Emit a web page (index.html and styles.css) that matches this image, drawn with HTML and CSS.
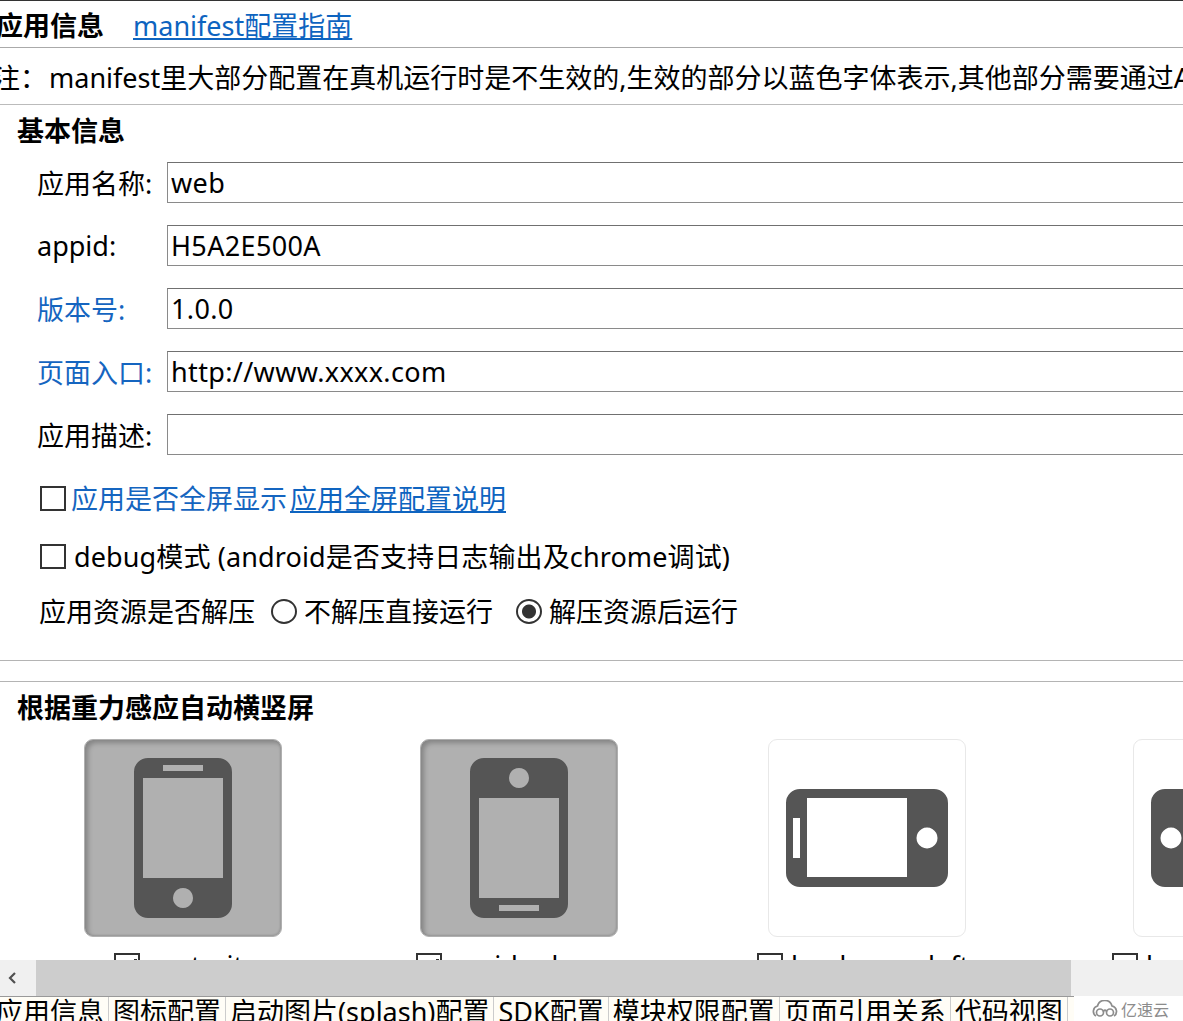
FILE: index.html
```html
<!DOCTYPE html>

<html lang="zh-CN">
    <head>
        <meta charset="utf-8">
        <title>manifest</title>
        <link rel="stylesheet" href="styles.css">
    </head>

    <body>
        <div class="pane">
            <div class="title-row">
                <b class="title-text">应用信息</b>
                <a href="#" class="guide-link">manifest配置指南</a>
            </div>
            <div class="note-row"><span class="note-head">注：</span>manifest里大部分配置在真机运行时是不生效的,生效的部分以蓝色字体表示,其他部分需要通过A</div>

            <div class="section">
                <h2 class="section-title">基本信息</h2>
                <div class="form-list">
                    <div class="form-row">
                        <label class="form-label">应用名称:</label>
                        <input type="text" class="form-input" value="web">
                    </div>
                    <div class="form-row">
                        <label class="form-label">appid:</label>
                        <input type="text" class="form-input" value="H5A2E500A">
                    </div>
                    <div class="form-row">
                        <label class="form-label blue">版本号:</label>
                        <input type="text" class="form-input" value="1.0.0">
                    </div>
                    <div class="form-row">
                        <label class="form-label blue">页面入口:</label>
                        <input type="text" class="form-input" value="http://www.xxxx.com">
                    </div>
                    <div class="form-row">
                        <label class="form-label">应用描述:</label>
                        <input type="text" class="form-input" value="">
                    </div>
                </div>

                <div class="option-row fullscreen-row">
                    <input type="checkbox" class="check">
                    <span class="blue">应用是否全屏显示</span>
                    <a href="#" class="guide-link small-gap">应用全屏配置说明</a>
                </div>
                <div class="option-row debug-row">
                    <input type="checkbox" class="check">
                    <span class="debug-text">debug模式 (android是否支持日志输出及chrome调试)</span>
                </div>
                <div class="option-row unzip-row">
                    <span>应用资源是否解压</span>
                    <input type="radio" name="unzip" class="radio first-radio">
                    <span>不解压直接运行</span>
                    <input type="radio" name="unzip" class="radio second-radio" checked>
                    <span>解压资源后运行</span>
                </div>
            </div>

            <div class="section orient-section">
                <h2 class="section-title">根据重力感应自动横竖屏</h2>
                <div class="orient-grid">
                    <div class="orient-item">
                        <div class="orient-card selected">
                            <svg viewBox="0 0 198 198" width="198" height="198">
                                <path class="phone" fill-rule="evenodd" d="M64 19h70a14 14 0 0 1 14 14v132a14 14 0 0 1-14 14h-70a14 14 0 0 1-14-14v-132a14 14 0 0 1 14-14zM59 39v100h80v-100zM79 26v6h40v-6zM99 149a10 10 0 1 0 .01 0z"/>
                            </svg>
                        </div>
                        <label class="orient-label first-label"><input type="checkbox" class="check" checked>portrait</label>
                    </div>
                    <div class="orient-item">
                        <div class="orient-card selected">
                            <svg viewBox="0 0 198 198" width="198" height="198">
                                <path class="phone" fill-rule="evenodd" d="M64 19h70a14 14 0 0 1 14 14v132a14 14 0 0 1-14 14h-70a14 14 0 0 1-14-14v-132a14 14 0 0 1 14-14zM59 59v100h80v-100zM79 166v6h40v-6zM99 29a10 10 0 1 0 .01 0z"/>
                            </svg>
                        </div>
                        <label class="orient-label second-label"><input type="checkbox" class="check" checked>upside-down</label>
                    </div>
                    <div class="orient-item">
                        <div class="orient-card">
                            <svg viewBox="0 0 198 198" width="198" height="198">
                                <path class="phone" fill-rule="evenodd" d="M32 50h134a14 14 0 0 1 14 14v70a14 14 0 0 1-14 14h-134a14 14 0 0 1-14-14v-70a14 14 0 0 1 14-14zM39 59v79h100v-79zM25 79v40h7v-40zM159 88.500a10.500 10.500 0 1 0 .01 0z"/>
                            </svg>
                        </div>
                        <label class="orient-label third-label"><input type="checkbox" class="check">landscape-left</label>
                    </div>
                    <div class="orient-item">
                        <div class="orient-card">
                            <svg viewBox="0 0 198 198" width="198" height="198">
                                <path class="phone" fill-rule="evenodd" d="M32 50h134a14 14 0 0 1 14 14v70a14 14 0 0 1-14 14h-134a14 14 0 0 1-14-14v-70a14 14 0 0 1 14-14zM59 59v79h100v-79zM166 79v40h7v-40zM38 88.500a10.500 10.500 0 1 0 .01 0z"/>
                            </svg>
                        </div>
                        <label class="orient-label fourth-label"><input type="checkbox" class="check">landscape-right</label>
                    </div>
                </div>
            </div>
        </div>

        <div class="scroll-bar">
            <div class="scroll-arrow">
                <svg viewBox="0 0 12 14" width="12" height="14"><path d="M9 2 L4 7 L9 12" fill="none" stroke="#505050" stroke-width="2.200"/></svg>
            </div>
            <div class="scroll-thumb"></div>
        </div>

        <div class="bottom-row">
            <div class="tabs">
                <div class="tab first-tab">应用信息</div>
                <div class="tab">图标配置</div>
                <div class="tab">启动图片(splash)配置</div>
                <div class="tab">SDK配置</div>
                <div class="tab">模块权限配置</div>
                <div class="tab">页面引用关系</div>
                <div class="tab">代码视图</div>
            </div>
            <div class="watermark">
                <svg viewBox="0 0 26 18" width="26" height="18">
                    <g fill="none" stroke="#8c8c8c" stroke-width="1.700">
                        <path d="M4 16A5.500 5.500 0 0 1 5.500 6A7.500 7.500 0 0 1 20 6A5.500 5.500 0 0 1 22 16"/>
                        <circle cx="8" cy="12.500" r="3.500"/>
                        <circle cx="18" cy="12.500" r="3.500"/>
                        <path d="M11.500 12C11.500 9.500 14.500 9.500 14.500 12"/>
                    </g>
                </svg>
                <span>亿速云</span>
            </div>
        </div>
    </body>
</html>
```

FILE: styles.css
```css
html, body {
    margin: 0;
    padding: 0;
    height: 1021px;
    overflow: hidden;
}

body {
    font-family: "Noto Sans", "Noto Sans CJK SC", sans-serif;
    font-size: 27px;
    color: #000;
    background-color: #fff;
}

.pane {
    height: 960px;
    overflow: hidden;
    white-space: nowrap;
}

.blue {
    color: #1565c0;
}

.guide-link {
    color: #0e64c0;
    text-decoration: underline;
}

.title-row {
    display: flex;
    align-items: center;
    height: 46px;
    border-top: 1px solid #333;
    border-bottom: 1px solid #aaa;
    margin-left: -4px;
}

.title-text {
    margin-right: 29px;
}

.note-row {
    display: flex;
    align-items: center;
    height: 56px;
    border-bottom: 1px solid #bbb;
    margin-left: -7px;
}

.note-head {
    margin-right: 2px;
}

.section {
    padding-left: 17px;
    height: 555px;
    border-bottom: 1px solid #b4b4b4;
}

.section-title {
    margin: 0;
    height: 52px;
    line-height: 52px;
    font-size: 27px;
    font-weight: 700;
}

.form-list {
    display: flex;
    flex-direction: column;
    gap: 22px;
    margin-top: 5px;
    padding-left: 20px;
}

.form-row {
    display: flex;
    align-items: center;
    height: 41px;
}

.form-label {
    width: 130px;
    flex-shrink: 0;
}

.form-input {
    width: 1100px;
    height: 41px;
    flex-shrink: 0;
    box-sizing: border-box;
    padding: 0 3px;
    border: 1px solid #8a8a8a;
    border-top-color: #707070;
    font-family: inherit;
    font-size: 27px;
    letter-spacing: 0.35px;
    color: #000;
    background-color: #fff;
}

.option-row {
    display: flex;
    align-items: center;
    height: 30px;
    padding-left: 23px;
}

.fullscreen-row {
    margin-top: 27px;
}

.debug-row {
    margin-top: 28px;
}

.unzip-row {
    margin-top: 25px;
    padding-left: 23px;
    margin-left: -1px;
}

.small-gap {
    margin-left: 3px;
}

.debug-text {
    margin-left: 3px;
    letter-spacing: 0.12px;
}

.check {
    appearance: none;
    width: 26px;
    height: 25px;
    margin: 3px 5px 0 0;
    flex-shrink: 0;
    box-sizing: border-box;
    border: 2px solid #333;
    background-color: #fff;
}

.check:checked {
    background: linear-gradient(#333, #333) no-repeat 18px 4px / 3px 3px;
}

.radio {
    appearance: none;
    width: 26px;
    height: 25px;
    margin: 3px 7px 0 16px;
    flex-shrink: 0;
    box-sizing: border-box;
    border: 2px solid #333;
    border-radius: 50%;
    background-color: #fff;
}

.radio:checked {
    background: radial-gradient(circle, #333 0, #333 6.500px, #fff 7.500px);
}

.second-radio {
    margin-left: 23px;
}

.orient-section {
    margin-top: 20px;
    height: 280px;
    border-top: 1px solid #b4b4b4;
    border-bottom: none;
}

.orient-grid {
    display: grid;
    grid-template-columns: 336px 348px 365px 198px;
    margin-top: 5px;
    padding-left: 67px;
}

.orient-card {
    width: 198px;
    height: 198px;
    box-sizing: border-box;
    border: 1px solid #e8e8e8;
    border-radius: 9px;
    overflow: hidden;
}

.orient-card svg {
    display: block;
    margin: -1px;
}

.orient-card.selected {
    border-color: #b0b0b0;
    background-color: #b0b0b0;
    box-shadow: inset 3px 3px 5px rgba(0, 0, 0, 0.25), inset -1px -1px 2px rgba(0, 0, 0, 0.12);
}

.phone {
    fill: #555;
}

.orient-label {
    display: flex;
    align-items: center;
    height: 30px;
    margin-top: 13px;
}

.orient-label .check {
    margin: 0 8px 0 0;
}

.first-label {
    margin-left: 30px;
}

.first-label .check {
    margin-right: 7px;
}

.second-label {
    margin-left: -4px;
}

.second-label .check {
    margin-right: 6px;
}

.third-label {
    margin-left: -11px;
}

.fourth-label {
    margin-left: -21px;
}

.scroll-bar {
    display: flex;
    height: 36px;
    background-color: #f0f0f0;
}

.scroll-arrow {
    display: flex;
    align-items: center;
    justify-content: center;
    width: 36px;
    box-sizing: border-box;
    padding-right: 12px;
}

.scroll-thumb {
    width: 1035px;
    background-color: #cdcdcd;
}

.bottom-row {
    display: flex;
    height: 25px;
    overflow: hidden;
}

.tabs {
    display: flex;
    width: 1074px;
    height: 40px;
    flex-shrink: 0;
    overflow: hidden;
    border-top: 1px solid #999;
    box-sizing: border-box;
    background-color: #fffdf6;
    white-space: nowrap;
    line-height: 30px;
}

.tab {
    padding: 0 4px;
    border-right: 1px solid #ccc;
}

.first-tab {
    margin-left: -8px;
}

.watermark {
    display: flex;
    align-items: center;
    gap: 3px;
    height: 25px;
    margin-left: 18px;
    color: #8c8c8c;
    font-size: 16px;
}
```
